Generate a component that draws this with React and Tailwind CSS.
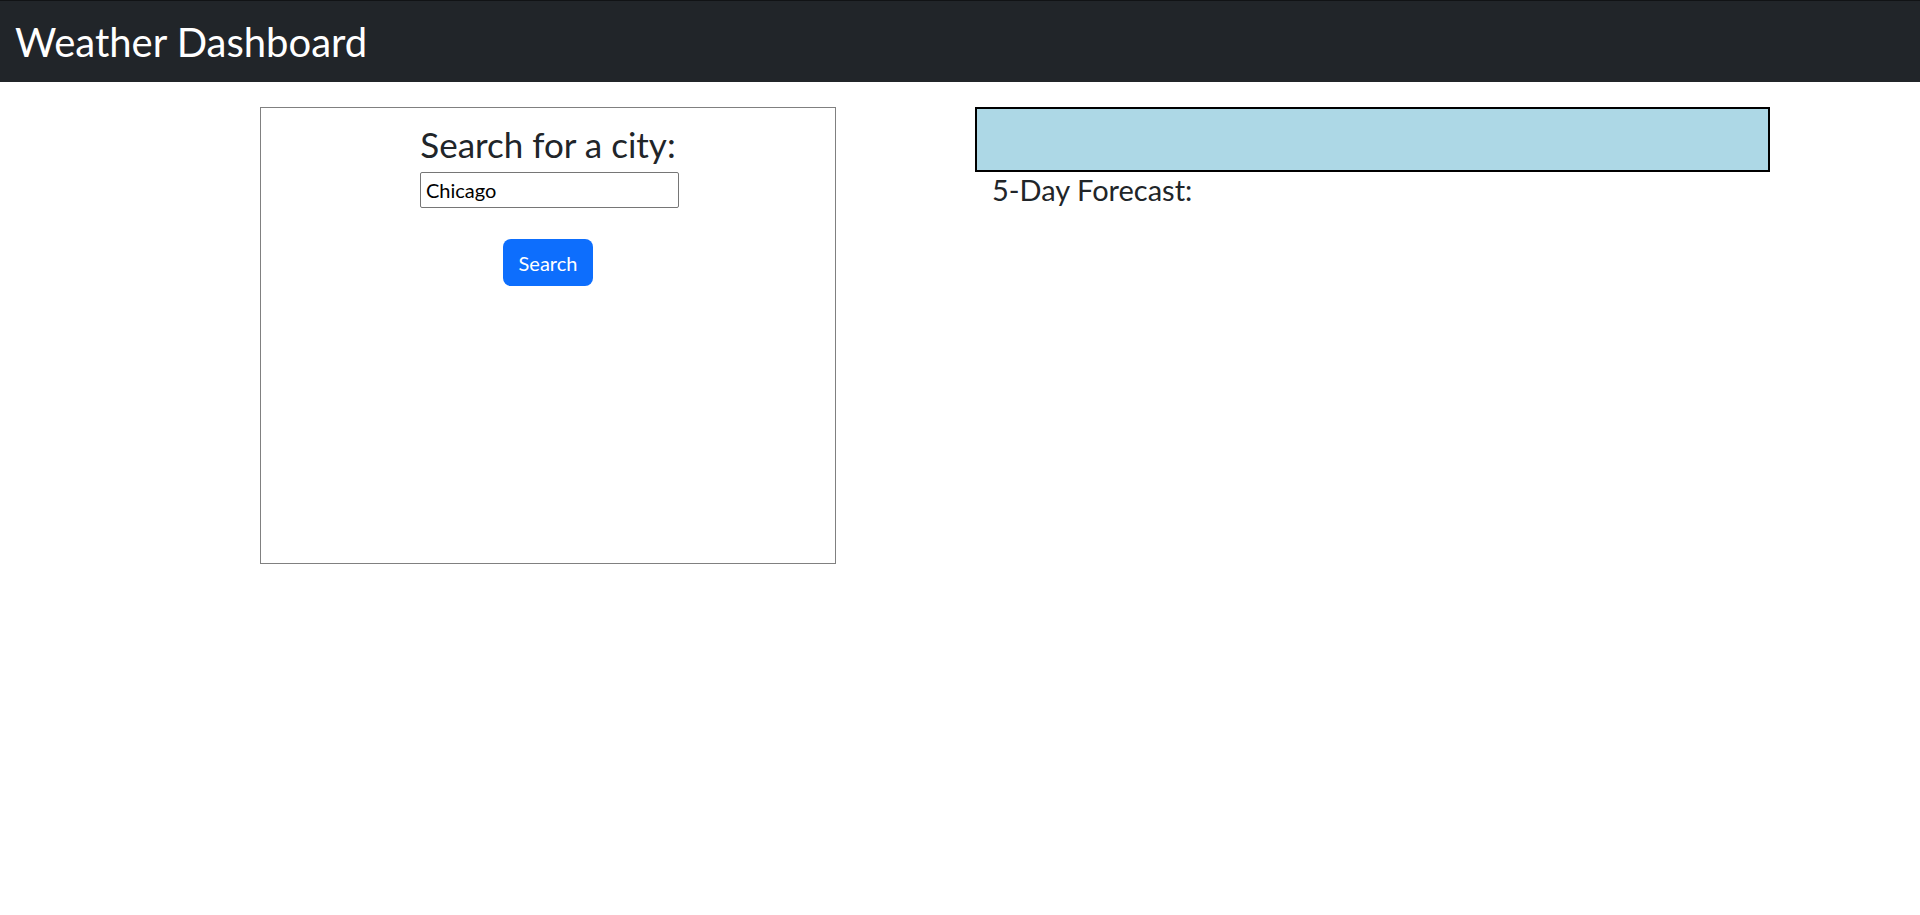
const App = () => {
  return (
    <div className="min-h-[915px] bg-white text-[#212529] font-['Lato','Liberation_Sans',sans-serif]">
      <header className="h-[82px] bg-[#212529] border-t border-[#111315] flex items-center px-[15px]">
        <h1 className="text-[40px] leading-[1.2] text-white">Weather Dashboard</h1>
      </header>

      <main className="flex pt-[25px]">
        <section className="ml-[260px] w-[576px] h-[457px] border border-[#808080] flex flex-col items-center">
          <h2 className="mt-[16px] mb-[8px] text-[35px] leading-[1.15]">Search for a city:</h2>
          <input
            type="text"
            defaultValue="Chicago"
            className="ml-[3px] w-[259px] h-[36px] px-[5px] text-[20px] text-black border border-[#767676] rounded-[2px] outline-none"
          />
          <button className="mt-[31px] h-[47px] px-4 rounded-[8px] bg-[#0d6efd] text-white text-[20px]">
            Search
          </button>
        </section>

        <section className="ml-[139px] w-[795px]">
          <div className="h-[65px] bg-[#add8e6] border-2 border-black"></div>
          <h3 className="px-[17px] pt-[1px] text-[29px] leading-[1.2]">5-Day Forecast:</h3>
        </section>
      </main>
    </div>
  );
};

export default App;
